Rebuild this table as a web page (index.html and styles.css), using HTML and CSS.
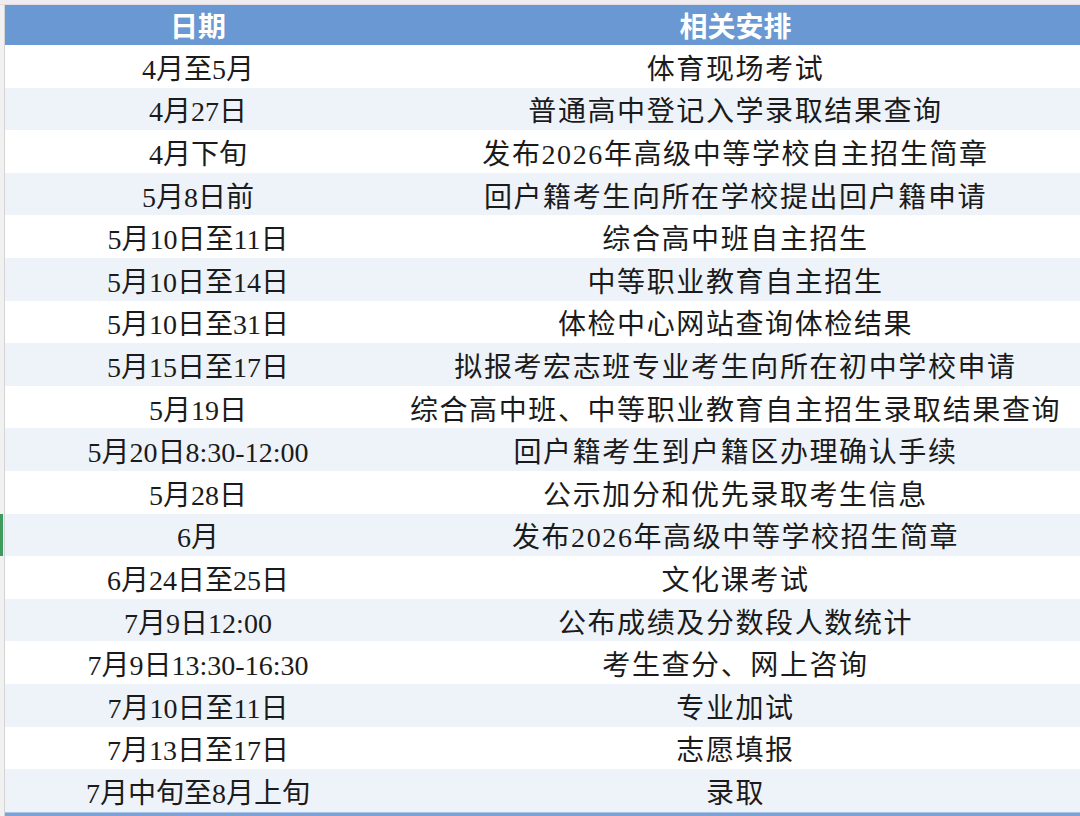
FILE: index.html
```html
<!DOCTYPE html>
<html lang="zh-CN">
<head>
<meta charset="utf-8">
<title>日程安排</title>
<link rel="stylesheet" href="styles.css">
</head>
<body>
<div class="page">
  <div class="topbar"></div>
  <div class="main">
    <div class="gutter"></div>
    <div class="sheet">
      <div class="row head"><div class="cell">日期</div><div class="cell">相关安排</div></div>
      <div class="row"><div class="cell">4月至5月</div><div class="cell task">体育现场考试</div></div>
      <div class="row alt"><div class="cell">4月27日</div><div class="cell task">普通高中登记入学录取结果查询</div></div>
      <div class="row"><div class="cell">4月下旬</div><div class="cell task">发布2026年高级中等学校自主招生简章</div></div>
      <div class="row alt"><div class="cell">5月8日前</div><div class="cell task">回户籍考生向所在学校提出回户籍申请</div></div>
      <div class="row"><div class="cell">5月10日至11日</div><div class="cell task">综合高中班自主招生</div></div>
      <div class="row alt"><div class="cell">5月10日至14日</div><div class="cell task">中等职业教育自主招生</div></div>
      <div class="row"><div class="cell">5月10日至31日</div><div class="cell task">体检中心网站查询体检结果</div></div>
      <div class="row alt"><div class="cell">5月15日至17日</div><div class="cell task">拟报考宏志班专业考生向所在初中学校申请</div></div>
      <div class="row"><div class="cell">5月19日</div><div class="cell task">综合高中班、中等职业教育自主招生录取结果查询</div></div>
      <div class="row alt"><div class="cell">5月20日8:30-12:00</div><div class="cell task">回户籍考生到户籍区办理确认手续</div></div>
      <div class="row"><div class="cell">5月28日</div><div class="cell task">公示加分和优先录取考生信息</div></div>
      <div class="row alt marked"><div class="cell">6月</div><div class="cell task">发布2026年高级中等学校招生简章</div></div>
      <div class="row"><div class="cell">6月24日至25日</div><div class="cell task">文化课考试</div></div>
      <div class="row alt"><div class="cell">7月9日12:00</div><div class="cell task">公布成绩及分数段人数统计</div></div>
      <div class="row"><div class="cell">7月9日13:30-16:30</div><div class="cell task">考生查分、网上咨询</div></div>
      <div class="row alt"><div class="cell">7月10日至11日</div><div class="cell task">专业加试</div></div>
      <div class="row"><div class="cell">7月13日至17日</div><div class="cell task">志愿填报</div></div>
      <div class="row alt"><div class="cell">7月中旬至8月上旬</div><div class="cell task">录取</div></div>
    </div>
  </div>
</div>
</body>
</html>
```

FILE: styles.css
```css
html, body {
  margin: 0;
  padding: 0;
  background: #ffffff;
}

.page {
  width: 1080px;
  height: 816px;
  overflow: hidden;
  display: flex;
  flex-direction: column;
  font-family: "Liberation Serif", "Noto Sans CJK SC", serif;
  color: #1b1b1b;
}

.topbar {
  height: 5px;
  background: #efebef;
  border-bottom: 1px solid #e2dde3;
  box-sizing: border-box;
}

.main {
  display: flex;
  flex: 1;
}

.gutter {
  width: 5px;
  background: #f1f1f1;
  border-right: 1px solid #d4d4d4;
  box-sizing: border-box;
}

.sheet {
  flex: 1;
  display: flex;
  flex-direction: column;
}

.row {
  position: relative;
  display: grid;
  grid-template-columns: 386px 1fr;
  height: 42.6px;
  background: #ffffff;
}

.row.alt {
  background: #eef3f9;
}

.row.head {
  height: 40px;
  background: #6a98d2;
  color: #ffffff;
  font-weight: bold;
}

.cell {
  display: flex;
  align-items: center;
  justify-content: center;
  font-size: 28px;
  white-space: nowrap;
  padding-top: 1px;
}

.cell.task {
  letter-spacing: 1.6px;
}

.row.head .cell {
  font-size: 28px;
  padding-top: 0;
  letter-spacing: 0;
}

.row.marked::before {
  content: "";
  position: absolute;
  left: -5px;
  top: 0;
  width: 3px;
  height: 100%;
  background: #3f9a5e;
}

.sheet::after {
  content: "";
  display: block;
  height: 3px;
  background: #7ba3d8;
  border-top: 1px solid #a9c4e8;
}
```
